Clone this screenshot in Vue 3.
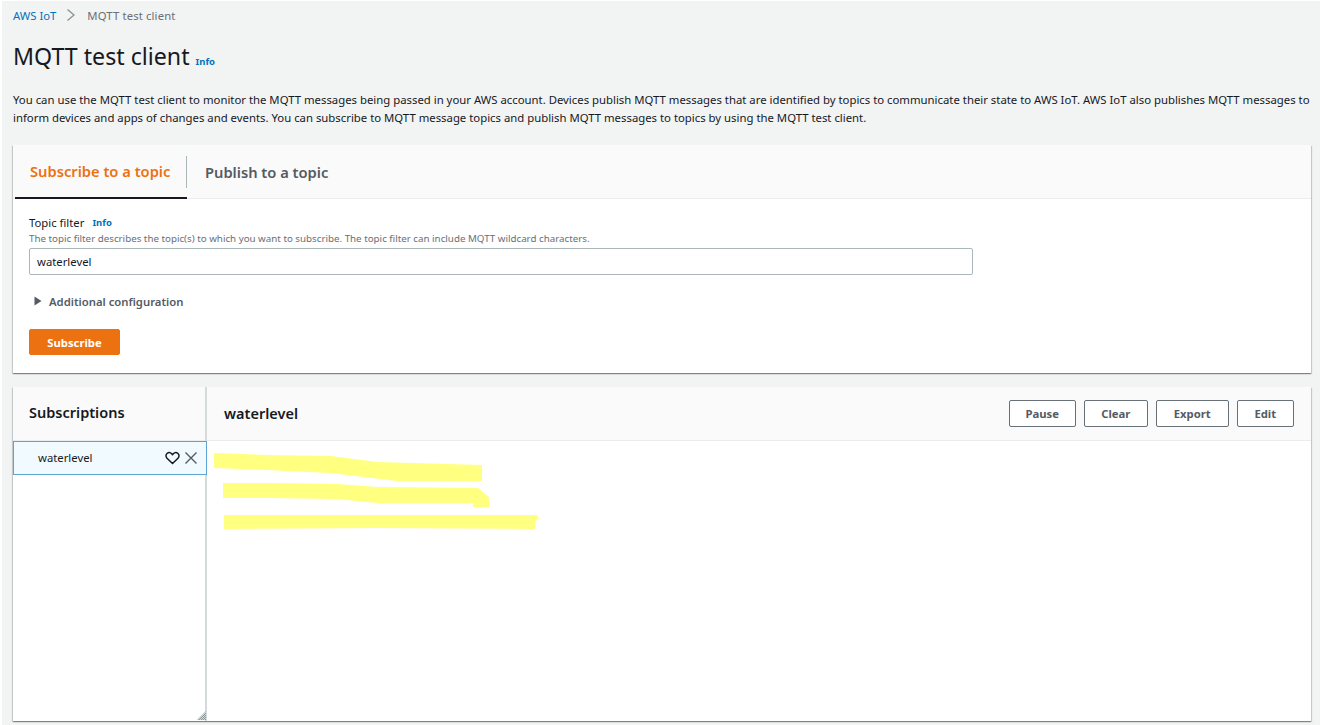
<template>
  <div class="page">
    <nav class="crumbs">
      <a class="link">AWS IoT</a>
      <svg class="chev" width="10" height="14" viewBox="0 0 10 14"><path d="M1.5 1.5 8 7l-6.500 5.500" fill="none" stroke="#879596" stroke-width="1.300"/></svg>
      <span class="here">MQTT test client</span>
    </nav>
    <header class="title">
      <h1>MQTT test client</h1>
      <a class="info big">Info</a>
    </header>
    <p class="intro">You can use the MQTT test client to monitor the MQTT messages being passed in your AWS account. Devices publish MQTT messages that are identified by topics to communicate their state to AWS IoT. AWS IoT also publishes MQTT messages to inform devices and apps of changes and events. You can subscribe to MQTT message topics and publish MQTT messages to topics by using the MQTT test client.</p>

    <section class="card topic">
      <div class="tabs">
        <div class="tab active">Subscribe to a topic</div>
        <div class="tab second">Publish to a topic</div>
      </div>
      <div class="form">
        <div class="label-row"><label>Topic filter</label><a class="info">Info</a></div>
        <div class="hint">The topic filter describes the topic(s) to which you want to subscribe. The topic filter can include MQTT wildcard characters.</div>
        <div class="input">waterlevel</div>
        <div class="expander">
          <svg width="8" height="10" viewBox="0 0 8 10"><path d="M0.500 0.500 7.500 5 0.500 9.500z" fill="#545b64"/></svg>
          <span>Additional configuration</span>
        </div>
        <button class="primary">Subscribe</button>
      </div>
    </section>

    <section class="card subs">
      <aside class="side">
        <div class="side-head">Subscriptions</div>
        <div class="item">
          <span>waterlevel</span>
          <svg class="heart" width="15" height="14" viewBox="0 0 15 14"><path d="M7.500 12.500 2 7.200C.6 5.800.7 3.700 2 2.500c1.400-1.200 3.500-1 4.700.3l.8.9.8-.9c1.200-1.300 3.300-1.500 4.700-.3 1.300 1.200 1.400 3.300 0 4.700z" fill="none" stroke="#16191f" stroke-width="1.500" stroke-linejoin="round"/></svg>
          <svg class="close" width="14" height="14" viewBox="0 0 14 14"><path d="M1.500 1.500l11 11M12.500 1.500l-11 11" fill="none" stroke="#545b64" stroke-width="1.400"/></svg>
        </div>
        <svg class="grip" width="9" height="9" viewBox="0 0 9 9">
          <defs>
            <pattern id="dither" width="2" height="2" patternUnits="userSpaceOnUse">
              <rect width="1" height="1" fill="#8a9495"/>
              <rect x="1" y="1" width="1" height="1" fill="#8a9495"/>
              <rect x="1" width="1" height="1" fill="#d5d9d9"/>
              <rect y="1" width="1" height="1" fill="#d5d9d9"/>
            </pattern>
          </defs>
          <path d="M9 0v9H0z" fill="url(#dither)"/>
        </svg>
      </aside>
      <div class="main">
        <div class="main-head">
          <h2>waterlevel</h2>
          <div class="actions">
            <button class="pause">Pause</button>
            <button class="clear">Clear</button>
            <button class="export">Export</button>
            <button class="edit">Edit</button>
          </div>
        </div>
        <svg class="marks" width="340" height="100" viewBox="0 0 340 100">
          <path d="M7 12 60 14 124 15 170 21 275 24V40H190L124 32 60 29 7 27z" fill="#ffff80"/>
          <path d="M16 42 60 42 130 43 170 46 271 47 282 56V66H266V62H170L130 58 60 57 16 57z" fill="#ffff80"/>
          <path d="M17 74 330 74 332 77 328 81V88L170 87 17 88z" fill="#ffff80"/>
        </svg>
      </div>
    </section>
  </div>
</template>

<script setup>
</script>

<style>
html, body { margin: 0; background: #f2f3f3; }
</style>

<style scoped>
.page {
  box-sizing: border-box;
  width: 1320px;
  height: 725px;
  overflow: hidden;
  padding: 1px 9px 0 11px;
  border-top: 1px solid #fff;
  border-left: 2px solid #fff;
  background: #f2f3f3;
  color: #16191f;
  font-family: "Noto Sans", "Open Sans", sans-serif;
  font-size: 11.5px;
}
.crumbs {
  display: flex;
  align-items: center;
  gap: 10px;
  height: 26px;
  font-size: 11.300px;
}
.link { color: #0073bb; }
.here { color: #687078; margin-left: 1px; letter-spacing: .13px; }
.title {
  display: flex;
  align-items: baseline;
  gap: 6px;
  height: 34px;
  margin-top: 11px;
}
h1 {
  margin: 0;
  font-size: 23.200px;
  font-weight: 400;
  line-height: 34px;
}
.info { color: #0073bb; font-size: 9.500px; font-weight: 700; }
.intro {
  margin: 18px 0 0;
  font-size: 11.350px;
  line-height: 18px;
  height: 37px;
  width: 1300px;
}
.card {
  background: #fff;
  box-sizing: border-box;
  width: 1298px;
  box-shadow: 0 1px 1px 0 rgba(0, 28, 36, .3), 1px 1px 1px 0 rgba(0, 28, 36, .15), -1px 1px 1px 0 rgba(0, 28, 36, .15);
}
.topic { margin-top: 17px; height: 228px; }
.tabs {
  display: flex;
  height: 54px;
  background: #fafafa;
  border-bottom: 1px solid #eaeded;
  box-sizing: border-box;
  padding-left: 2px;
}
.tab {
  position: relative;
  display: flex;
  align-items: center;
  padding: 0 18px 0 15px;
  font-size: 14.700px;
  font-weight: 600;
  color: #545b64;
  height: 54px;
  box-sizing: border-box;
}
.tab.active {
  width: 172px;
  color: #ec7211;
  border-bottom: 2px solid #16191f;
  padding-right: 0;
  white-space: nowrap;
}
.tab.second { padding-left: 18px; }
.tab.active::after {
  content: "";
  position: absolute;
  right: 0;
  top: 11px;
  height: 32px;
  width: 1px;
  background: #aab7b8;
}
.form { padding: 15px 16px 0; }
.label-row { display: flex; align-items: center; gap: 8px; height: 16px; font-size: 11.300px; }
.hint { color: #687078; font-size: 9.770px; line-height: 14px; height: 14px; margin-top: 2px; }
.input {
  box-sizing: border-box;
  width: 944px;
  height: 27px;
  margin-top: 2px;
  padding-left: 7px;
  border: 1px solid #aab7b8;
  border-radius: 2px;
  line-height: 25px;
  font-size: 11.300px;
}
.expander {
  display: flex;
  align-items: center;
  gap: 7px;
  margin-top: 18px;
  height: 16px;
  padding-left: 5px;
  font-size: 11.300px;
  font-weight: 600;
  color: #545b64;
}
button {
  font-family: inherit;
  font-weight: 700;
  font-size: 11.300px;
  border-radius: 2px;
  box-sizing: border-box;
  padding: 0;
  cursor: pointer;
}
.primary {
  display: block;
  margin-top: 20px;
  width: 91px;
  height: 26px;
  background: #ec7211;
  border: 1px solid #ec7211;
  color: #fff;
}
.subs { margin-top: 14px; height: 334px; display: flex; }
.side {
  position: relative;
  width: 194px;
  flex: none;
  border-right: 2px solid #d5dbdb;
  box-sizing: border-box;
}
.side-head {
  height: 54px;
  box-sizing: border-box;
  padding-left: 16px;
  line-height: 50px;
  font-size: 14.500px;
  font-weight: 600;
  background: #fafafa;
  border-bottom: 1px solid #eaeded;
}
.item {
  display: flex;
  align-items: center;
  box-sizing: border-box;
  width: 194px;
  height: 34px;
  padding-left: 24px;
  background: #f1faff;
  border: 1px solid #5ba4d4;
  font-size: 11.300px;
  color: #16191f;
  position: relative;
}
.item span { flex: 1; padding-bottom: 2px; }
.heart { margin-right: 4px; }
.close { margin-right: 8px; }
.grip { position: absolute; right: -1px; bottom: 1px; }
.main { flex: 1; min-width: 0; }
.main-head {
  display: flex;
  align-items: center;
  justify-content: space-between;
  height: 54px;
  box-sizing: border-box;
  padding: 0 17px;
  background: #fafafa;
  border-bottom: 1px solid #eaeded;
}
h2 { margin: 0; padding-bottom: 2px; font-size: 14.500px; font-weight: 600; }
.actions { display: flex; gap: 7.500px; }
.actions button {
  height: 27px;
  background: #fff;
  border: 1px solid #687078;
  color: #545b64;
}
.actions .pause { width: 67.500px; }
.actions .clear { width: 64.500px; }
.actions .export { width: 73.500px; }
.actions .edit { width: 57.500px; }
.marks { display: block; }
</style>
